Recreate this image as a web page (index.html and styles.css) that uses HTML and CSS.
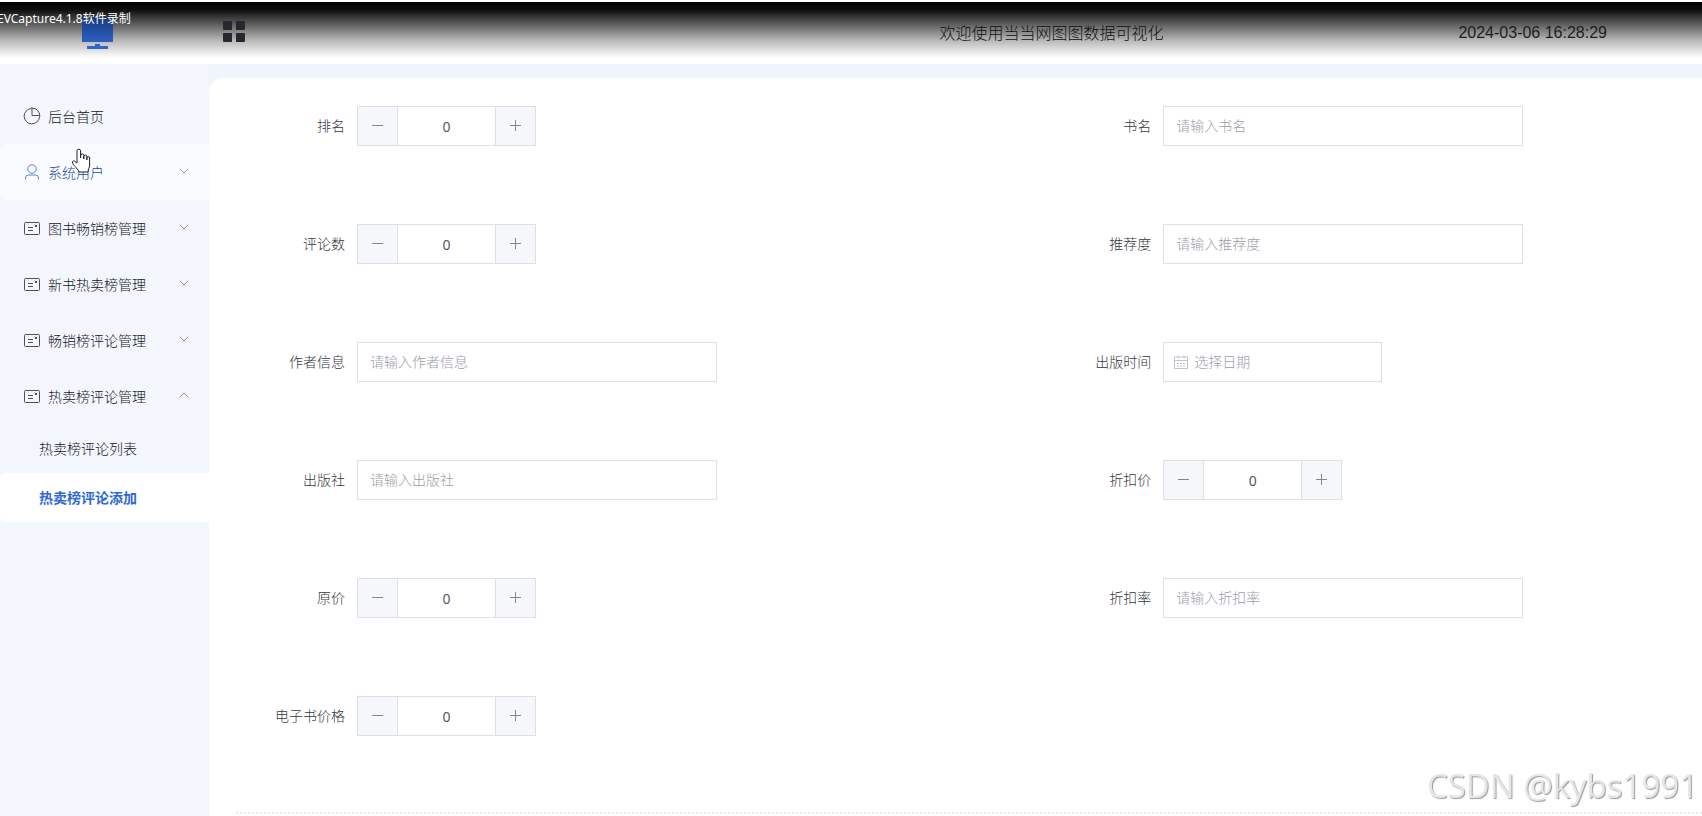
FILE: index.html
```html
<!DOCTYPE html>
<html lang="zh-CN">
<head>
  <meta charset="utf-8">
  <title>当当网图图数据可视化</title>
  <link rel="stylesheet" href="styles.css">
</head>
<body>
  <!-- shared icons -->
  <svg class="sprite" aria-hidden="true">
    <symbol id="i-pie" viewBox="0 0 18 18"><path d="M8 1.500a7.700 7.700 0 1 0 8.500 8.500M16.500 10a8 8 0 0 0 .3-1.500H9V1h-1M9 1a7.800 7.800 0 0 1 7.800 7.500"/></symbol>
    <symbol id="i-user" viewBox="0 0 18 18"><circle cx="9" cy="6" r="4.200"/><path d="M2.500 16.500v-1.500a3 3 0 0 1 3-3h7a3 3 0 0 1 3 3v1.500"/></symbol>
    <symbol id="i-card" viewBox="0 0 18 18"><rect x="1.500" y="3.500" width="15" height="12" rx="1"/><path d="M5 8.500h5M5 11.500h5"/><path d="M12 7h2" stroke-width="2"/></symbol>
    <symbol id="i-down" viewBox="0 0 12 12"><path d="M2 4l4 4 4-4"/></symbol>
    <symbol id="i-up" viewBox="0 0 12 12"><path d="M2 8l4-4 4 4"/></symbol>
    <symbol id="i-minus" viewBox="0 0 12 12"><path d="M0 5.500h11"/></symbol>
    <symbol id="i-plus" viewBox="0 0 12 12"><path d="M0 5.500h11M5.500 0v11"/></symbol>
  </svg>

  <header class="header">
    <div class="logo">
      <svg width="32" height="32" viewBox="0 0 32 32" aria-hidden="true">
        <linearGradient id="screen" x1="0" y1="0" x2="0" y2="1">
          <stop offset="0" stop-color="#173a78"/>
          <stop offset=".6" stop-color="#2858b4"/>
          <stop offset="1" stop-color="#2f68d0"/>
        </linearGradient>
        <path fill="url(#screen)" d="M0 0h31v25H0zM13 27h5v2h8v3H5v-3h8z"/>
      </svg>
    </div>
    <button class="collapse" type="button" aria-label="菜单">
      <svg width="22" height="22" viewBox="0 0 22 22"><path d="M1 0h7a1 1 0 0 1 1 1v8H1a1 1 0 0 1-1-1V1a1 1 0 0 1 1-1zM13 0h8a1 1 0 0 1 1 1v7a1 1 0 0 1-1 1h-8zM0 12h9v9H1a1 1 0 0 1-1-1zM13 12h8a1 1 0 0 1 1 1v7a1 1 0 0 1-1 1h-8z"/></svg>
    </button>
    <div class="welcome">欢迎使用当当网图图数据可视化</div>
    <time class="clock">2024-03-06 16:28:29</time>
    <div class="recorder">EVCapture4.1.8软件录制</div>
  </header>

  <div class="container">
    <nav class="sidebar">
      <a class="menu-item" href="#"><svg class="icon"><use href="#i-pie"/></svg>后台首页</a>
      <a class="menu-item hover" href="#"><svg class="icon"><use href="#i-user"/></svg>系统用户<svg class="arrow"><use href="#i-down"/></svg></a>
      <a class="menu-item" href="#"><svg class="icon"><use href="#i-card"/></svg>图书畅销榜管理<svg class="arrow"><use href="#i-down"/></svg></a>
      <a class="menu-item" href="#"><svg class="icon"><use href="#i-card"/></svg>新书热卖榜管理<svg class="arrow"><use href="#i-down"/></svg></a>
      <a class="menu-item" href="#"><svg class="icon"><use href="#i-card"/></svg>畅销榜评论管理<svg class="arrow"><use href="#i-down"/></svg></a>
      <a class="menu-item" href="#"><svg class="icon"><use href="#i-card"/></svg>热卖榜评论管理<svg class="arrow"><use href="#i-up"/></svg></a>
      <a class="sub-item" href="#">热卖榜评论列表</a>
      <a class="sub-item active" href="#">热卖榜评论添加</a>
      <svg class="cursor" width="20" height="26" viewBox="0 0 20 26" aria-hidden="true"><path d="M6 15V3a1.800 1.800 0 0 1 3.600 0v7V7.500a1.600 1.600 0 0 1 3.200 0V11 8.500a1.500 1.500 0 0 1 3 0V12v-2a1.400 1.400 0 0 1 2.800 0v7c0 3-1.600 4-1.600 7H8c0-2-5-6-6.500-9-.6-1.500.8-2.600 2-1.800z"/></svg>
    </nav>

    <main class="main">
      <form class="form">
        <div class="field">
          <label for="rank">排名</label>
          <div class="number"><button type="button" aria-label="减少"><svg><use href="#i-minus"/></svg></button><input id="rank" type="text" value="0"><button type="button" aria-label="增加"><svg><use href="#i-plus"/></svg></button></div>
        </div>
        <div class="field">
          <label for="title">书名</label>
          <input class="text" id="title" type="text" placeholder="请输入书名">
        </div>
        <div class="field">
          <label for="comments">评论数</label>
          <div class="number"><button type="button" aria-label="减少"><svg><use href="#i-minus"/></svg></button><input id="comments" type="text" value="0"><button type="button" aria-label="增加"><svg><use href="#i-plus"/></svg></button></div>
        </div>
        <div class="field">
          <label for="recommend">推荐度</label>
          <input class="text" id="recommend" type="text" placeholder="请输入推荐度">
        </div>
        <div class="field">
          <label for="author">作者信息</label>
          <input class="text" id="author" type="text" placeholder="请输入作者信息">
        </div>
        <div class="field">
          <label for="date">出版时间</label>
          <div class="date">
            <svg width="14" height="14" viewBox="0 0 14 14" aria-hidden="true"><path d="M.5 2h13v11.500H.5zM.5 5.500h13M4 .5v3M10 .5v3M3 8.500h2M6 8.500h2M9 8.500h2M3 11h2M6 11h2M9 11h2"/></svg>
            <input id="date" type="text" placeholder="选择日期">
          </div>
        </div>
        <div class="field">
          <label for="press">出版社</label>
          <input class="text" id="press" type="text" placeholder="请输入出版社">
        </div>
        <div class="field">
          <label for="discount">折扣价</label>
          <div class="number"><button type="button" aria-label="减少"><svg><use href="#i-minus"/></svg></button><input id="discount" type="text" value="0"><button type="button" aria-label="增加"><svg><use href="#i-plus"/></svg></button></div>
        </div>
        <div class="field">
          <label for="price">原价</label>
          <div class="number"><button type="button" aria-label="减少"><svg><use href="#i-minus"/></svg></button><input id="price" type="text" value="0"><button type="button" aria-label="增加"><svg><use href="#i-plus"/></svg></button></div>
        </div>
        <div class="field">
          <label for="rate">折扣率</label>
          <input class="text" id="rate" type="text" placeholder="请输入折扣率">
        </div>
        <div class="field">
          <label for="ebook">电子书价格</label>
          <div class="number"><button type="button" aria-label="减少"><svg><use href="#i-minus"/></svg></button><input id="ebook" type="text" value="0"><button type="button" aria-label="增加"><svg><use href="#i-plus"/></svg></button></div>
        </div>
      </form>
    </main>
  </div>

  <div class="watermark">CSDN @kybs1991</div>
</body>
</html>
```
FILE: styles.css
```css
* {
  box-sizing: border-box;
}

body {
  margin: 0;
  min-height: 100vh;
  display: flex;
  flex-direction: column;
  overflow: hidden;
  background: #f0f4fd;
  font-family: "Noto Sans", "Noto Sans CJK SC", sans-serif;
  font-size: 14px;
  font-weight: 300;
  color: #36383d;
}

input,
button {
  font: inherit;
  color: inherit;
}

.sprite {
  position: absolute;
  width: 0;
  height: 0;
}

/* header */
.header {
  position: relative;
  display: flex;
  align-items: center;
  height: 64px;
  border-top: 2px solid #fff;
  background: linear-gradient(#000 0, #0c0c0c 12%, #6c6c6c 40%, #b8b8b8 62%, #fff 90%);
  color: #0e0f12;
  font-family: "Liberation Sans", "Noto Sans CJK SC", sans-serif;
  font-size: 16px;
}

.logo {
  width: 223px;
  padding-left: 82px;
}

.logo svg,
.collapse svg {
  display: block;
}

.collapse {
  padding: 0 0 2px;
  border: 0;
  background: none;
  fill: #26272f;
}

.welcome {
  margin-left: auto;
  padding-bottom: 2px;
}

.clock {
  margin: 0 95px 0 295px;
  color: #1c1d22;
}

.recorder {
  position: absolute;
  top: 9px;
  left: -3px;
  color: #fff;
  font-family: "Noto Sans", "Noto Sans CJK SC", sans-serif;
  font-size: 12px;
  font-weight: 400;
  line-height: 16px;
}

.container {
  flex: 1;
  display: flex;
}

/* sidebar */
.sidebar {
  position: relative;
  width: 209px;
  padding-top: 24px;
  background: #f3f6fc;
}

.menu-item,
.sub-item {
  display: flex;
  align-items: center;
  color: #14171f;
  text-decoration: none;
}

.menu-item {
  height: 56px;
  padding: 0 19px 0 23px;
}

.menu-item.hover {
  border-radius: 6px 0 0 6px;
  background: #fafbfe;
  color: #1c4898;
}

.icon {
  width: 18px;
  height: 18px;
  margin-right: 7px;
  fill: none;
  stroke: #4a4e5c;
}

.hover .icon {
  stroke: #5c7ddc;
}

.arrow {
  width: 12px;
  height: 12px;
  margin: 0 0 2px auto;
  fill: none;
  stroke: #909399;
}

.sub-item {
  height: 49px;
  padding: 0 0 2px 39px;
}

.sub-item.active {
  border-radius: 6px 0 0 6px;
  background: #fff;
  color: #2e69d6;
  font-weight: bold;
}

.cursor {
  position: absolute;
  top: 84px;
  left: 71px;
  fill: #fff;
  stroke: #222;
}

/* form */
.main {
  flex: 1;
  margin-top: 14px;
  padding: 28px 0 0 27px;
  border-radius: 14px 0 0 0;
  background: #fff;
}

.form {
  display: grid;
  grid-template-columns: 55% 45%;
  row-gap: 78px;
  padding-bottom: 76px;
  border-bottom: 2px dotted #ebebeb;
}

.field {
  display: flex;
  align-items: center;
  height: 40px;
}

.field label {
  width: 121px;
  padding: 0 12px 2px 0;
  text-align: right;
}

.text,
.number,
.date {
  height: 40px;
  border: 1px solid #dcdfe6;
  background: #fff;
}

.text {
  width: 360px;
  padding: 0 12px 2px;
}

.number {
  display: flex;
  width: 179px;
}

.number button {
  width: 39px;
  padding: 0;
  border: 0;
  background: #f5f7fa;
}

.number svg {
  display: block;
  width: 12px;
  height: 12px;
  margin: 0 auto;
  fill: none;
  stroke: #83868c;
}

.number input {
  flex: 1;
  min-width: 0;
  padding: 0;
  border: solid #dcdfe6;
  border-width: 0 1px;
  color: #55575c;
  font-weight: 400;
  text-align: center;
}

.date {
  display: flex;
  align-items: center;
  gap: 6px;
  width: 219px;
  padding: 0 10px;
}

.date svg {
  fill: none;
  stroke: #c0c4cc;
}

.date input {
  flex: 1;
  min-width: 0;
  padding: 0 0 2px;
  border: 0;
}

input::placeholder {
  color: #9a9eaa;
}

.watermark {
  position: fixed;
  right: 4px;
  bottom: 10px;
  color: #e6e6e6;
  font-family: "Open Sans", sans-serif;
  font-size: 33px;
  font-weight: 400;
  line-height: 40px;
  text-shadow: 1px 1px 1px #999;
}
```
